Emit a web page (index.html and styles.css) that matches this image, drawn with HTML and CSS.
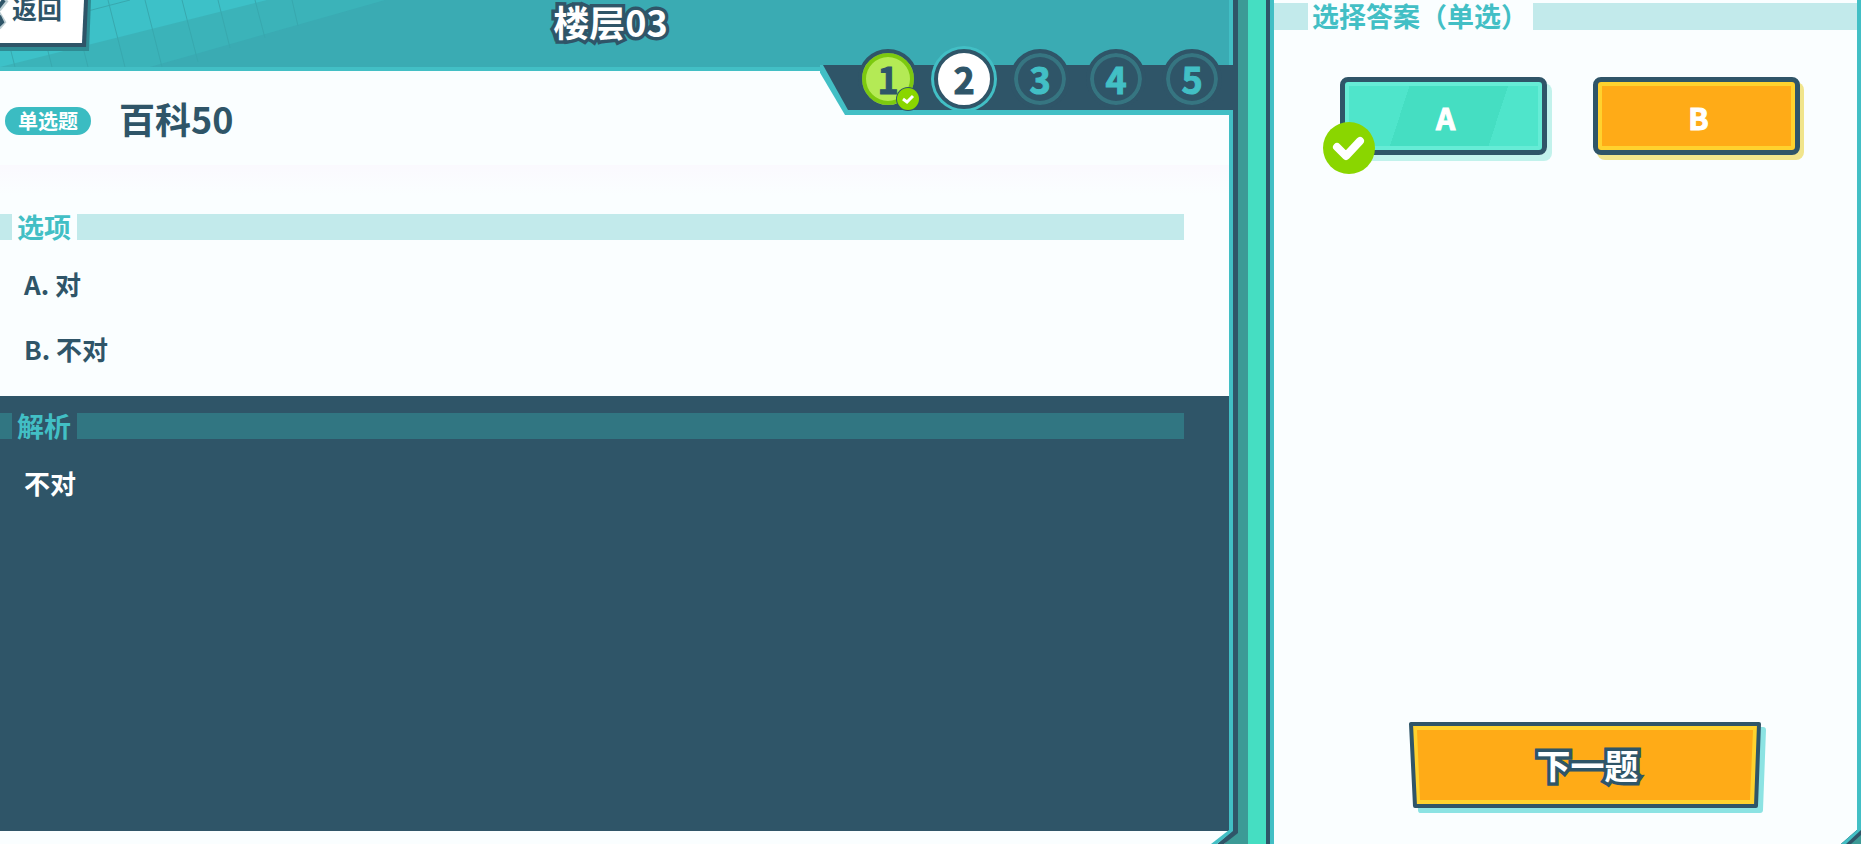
FILE: index.html
```html
<!doctype html>
<html lang="zh-CN">
<head>
<meta charset="utf-8">
<title>楼层03</title>
<link rel="stylesheet" href="styles.css">
</head>
<body>
<div class="box">
	<div class="main">
		<div class="header">
			<svg class="deco" width="400" height="67" viewBox="0 0 400 67">
				<path d="M0 67V0H385L150 67z" fill="#3bb3b9"/>
				<path d="M0 67V0H267z" fill="#3dc1c8"/>
				<path d="M-2 0l17 67M35 0l17 67M71 0l17 67M108 0l17 67M145 0l17 67M182 0l16 62M218 0l12 48M255 0l10 38M292 0l6 26M84 12L130 0" fill="none" stroke="#38a8ae" stroke-width="1"/>
			</svg>
			<button class="back">
				<svg class="backbg" width="92" height="54" viewBox="0 0 92 54">
					<path d="M0 0H91L89 51H0z" fill="#2f8b93"/>
					<path d="M0 0H88L86 47H0z" fill="#2f5568"/>
					<path d="M0 0H84L82 43H0z" fill="#fff"/>
					<path d="M7 0L-1 10M-2 12L4 22L-1 28" fill="none" stroke="#bccdd2" stroke-width="4"/>
					<path d="M4 0L-3 9M-1 16L2 22L-2 26" fill="none" stroke="#2f5568" stroke-width="4"/>
				</svg>
				<span>返回</span>
			</button>
			<h1>楼层03</h1>
		</div>
		<div class="steps">
			<svg class="slope" width="28" height="50" viewBox="0 0 28 50">
				<path d="M0 0H28V50H25L-1 6z" fill="#42bfc5"/>
				<path d="M3 0H28V45z" fill="#2f5568"/>
			</svg>
			<ol>
				<li class="done">1<svg width="24" height="24" viewBox="0 0 24 24"><circle cx="12" cy="12" r="12" fill="#2f5568"/><circle cx="12" cy="12" r="11" fill="#8ad600"/><path d="M7 12L11 15L17 9" fill="none" stroke="#fff" stroke-width="3"/></svg></li>
				<li class="now">2</li>
				<li>3</li>
				<li>4</li>
				<li>5</li>
			</ol>
		</div>
		<div class="question">
			<span class="tag">单选题</span>
			<h2>百科50</h2>
		</div>
		<div class="options">
			<h3 class="bar"><span>选项</span></h3>
			<p>A. 对</p>
			<p>B. 不对</p>
		</div>
		<div class="analysis">
			<h3 class="bar"><span>解析</span></h3>
			<p>不对</p>
		</div>
		<svg class="corner" width="27" height="14" viewBox="0 0 27 14">
			<path d="M27 0V14H13z" fill="#3c9a96"/>
			<path d="M22 0H27V3L13 14H6z" fill="#2f5568"/>
			<path d="M18 0H22V1L6 14H0z" fill="#42bfc5"/>
		</svg>
	</div>
	<div class="gutter"></div>
	<div class="side">
		<h3 class="bar"><span>选择答案（单选）</span></h3>
		<div class="answers">
			<button class="answer picked">A<svg width="52" height="52" viewBox="0 0 52 52"><circle cx="26" cy="26" r="26" fill="#8ad600"/><path d="M14 25L23 34L37 19" fill="none" stroke="#fff" stroke-width="8" stroke-linecap="round" stroke-linejoin="round"/></svg></button>
			<button class="answer">B</button>
		</div>
		<button class="next">
			<svg width="358" height="92" viewBox="0 0 358 92">
				<path d="M8 8H354L351 88H12z" fill="#8ce3e3" stroke="#8ce3e3" stroke-width="6" stroke-linejoin="round"/>
				<path d="M2 2H350L347 84H6z" fill="#ffd22e" stroke="#2f5568" stroke-width="4" stroke-linejoin="round"/>
				<path d="M8 8H344L341 78H11z" fill="#ffab17"/>
			</svg>
			<span>下一题</span>
		</button>
		<svg class="corner" width="20" height="14" viewBox="0 0 20 14">
			<path d="M20 0V14H0L16 0z" fill="#3c9a96"/>
			<path d="M16 0H20V5L10 14H0z" fill="#2f5568"/>
			<path d="M16 0H20L5 14H0z" fill="#42bfc5"/>
		</svg>
	</div>
</div>
</body>
</html>
```
FILE: styles.css
```css
*{margin:0;padding:0;box-sizing:border-box;font-family:'Noto Sans CJK SC','Noto Sans',sans-serif;font-weight:bold;}
html,body{height:100%;overflow:hidden;background:#fafeff;color:#2f5568;}
button{border:0;background:none;cursor:pointer;}
.box{display:flex;height:100%;}

/* 左侧题目 */
.main{position:relative;display:flex;flex-direction:column;flex:1;min-width:0;padding-bottom:13px;border-right:5px solid #2f5568;}
.main:after{content:"";position:absolute;top:0;right:0;bottom:13px;width:4px;background:#42bfc5;}
.header{position:relative;height:71px;padding-right:12px;border-bottom:4px solid #42bfc5;background:#3aabb3;}
.header h1{position:relative;text-align:center;font-size:36px;line-height:42px;color:#fff;-webkit-text-stroke:7px #2f5568;paint-order:stroke fill;stroke-linejoin:round;}
.deco{position:absolute;top:0;left:0;}
.back{position:absolute;top:0;left:0;z-index:1;width:92px;height:54px;}
.backbg{position:absolute;top:0;left:0;}
.back span{position:absolute;top:-8px;left:12px;font-size:25px;line-height:32px;color:#2f5568;}

.steps{position:absolute;top:65px;right:0;z-index:2;display:flex;height:50px;}
.steps ol{display:flex;gap:16px;padding:0 11px 0 10px;border-bottom:5px solid #42bfc5;background:#2f5568;list-style:none;}
.steps li{position:relative;width:60px;height:60px;margin-top:-16px;border:4px solid #2f5568;border-radius:50%;background:#2f5568;box-shadow:inset 0 0 0 4px #367581;text-align:center;font-size:36px;line-height:50px;color:#42bfc5;-webkit-text-stroke:1px;}
.steps .done{background:#b4ea55;box-shadow:inset 0 0 0 4px #7cc90f;color:#2f5568;}
.steps .now{background:#fff;box-shadow:0 0 0 3px #42bfc5;color:#2f5568;}
.done svg{position:absolute;right:-6px;bottom:-6px;}

.question{display:flex;align-items:center;height:94px;padding:6px 5px 0;gap:28px;}
.tag{width:86px;border-radius:14px;background:#3bbcc2;text-align:center;font-size:20px;line-height:28px;color:#fff;}
.question h2{padding-bottom:6px;font-size:36px;line-height:48px;}

.bar{display:flex;height:26px;padding-left:12px;background:#c2eaeb;font-size:27px;line-height:26px;color:#42bfc5;}
.bar span{padding:0 6px 0 5px;background:#fafeff;}
.main .bar{margin-right:49px;}
.main p{padding-left:24px;font-size:26px;line-height:65px;}
.options{height:231px;padding-top:49px;background:linear-gradient(#faf9fe,#fafeff 30px);}
.options .bar,.analysis .bar{margin-bottom:11px;}
.analysis{flex:1;padding-top:17px;background:#2f5568;color:#fff;}
.analysis .bar{background:#317682;}
.analysis .bar span{background:#2f5568;}
.corner{position:absolute;right:0;bottom:0;}
.main .corner{right:-5px;}

/* 中间竖条 */
.gutter{width:28px;border-left:10px solid #3c9a96;background:#45dec2;}

/* 右侧答案 */
.side{position:relative;display:flex;flex-direction:column;width:595px;padding-top:3px;border-left:4px solid #2f5568;box-shadow:inset 4px 0 #42bfc5,inset -4px 0 #42bfc5;}
.side .bar{margin:0 4px;height:27px;padding-left:34px;}
.side .bar span{padding:0 5px 0 4px;}
.answers{display:flex;justify-content:center;gap:46px;padding:47px 0 0 9px;}
.answer{position:relative;width:207px;height:78px;padding:2px 0 0 4px;border:5px solid #2f5568;border-radius:8px;background:#ffab17;box-shadow:inset 0 0 0 4px #ffd22e,4px 5px #f1e58c;font-size:30px;color:#fff;-webkit-text-stroke:1px;}
.picked{background:linear-gradient(108deg,#4fe5cb 30%,#45dec2 30%,#45dec2 75%,#4fe5cb 75%);box-shadow:inset 0 0 0 4px #66ecd6,5px 6px #c2f2ec;}
.answer svg{position:absolute;left:-22px;bottom:-24px;}
.next{position:relative;align-self:center;width:358px;height:92px;margin:auto 0 30px 44px;}
.next svg{position:absolute;top:0;left:0;}
.next span{position:relative;display:block;padding-bottom:6px;font-size:34px;line-height:48px;color:#fff;-webkit-text-stroke:7px #2f5568;paint-order:stroke fill;stroke-linejoin:round;}
```
